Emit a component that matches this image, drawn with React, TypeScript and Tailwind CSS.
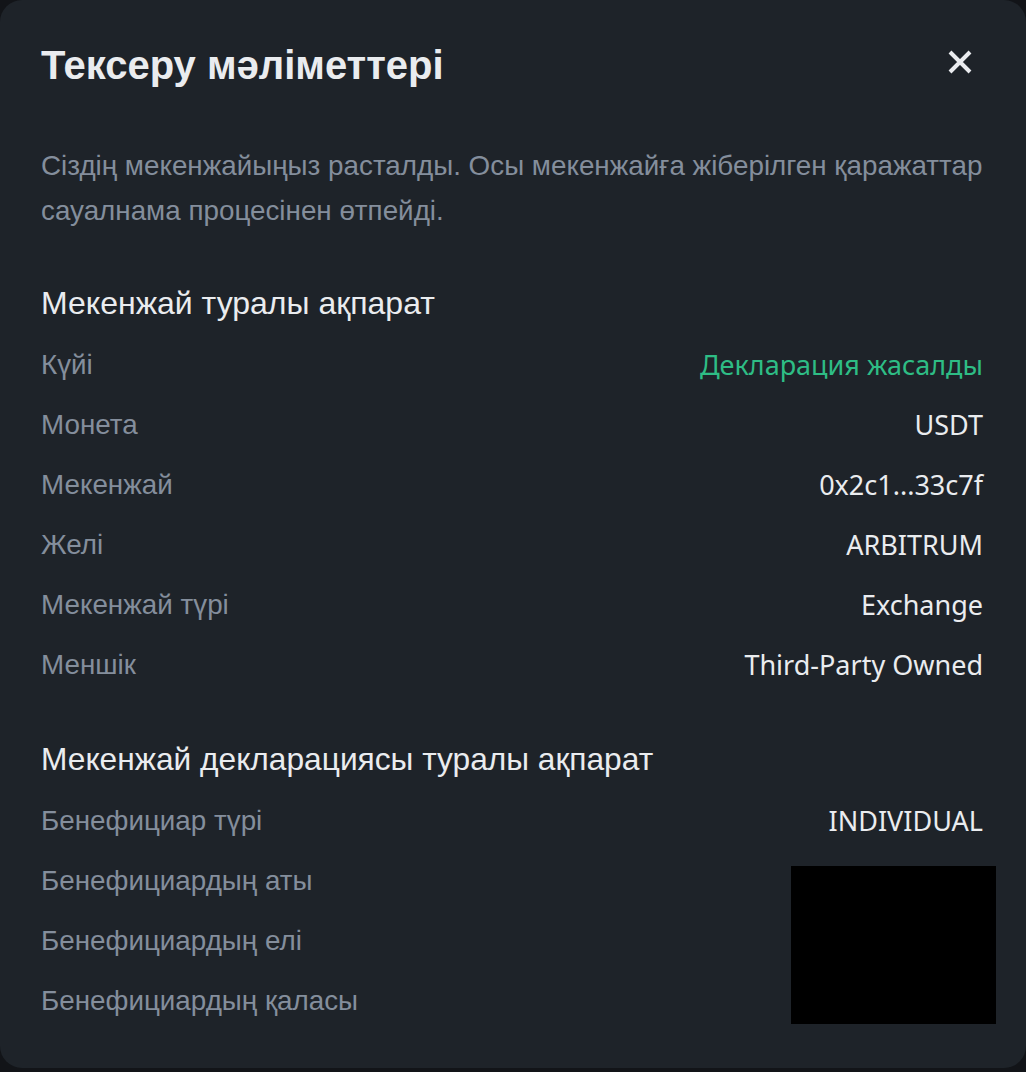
import React from "react";

const rowsA = [
  { label: "Күйі", value: "Декларация жасалды", green: true },
  { label: "Монета", value: "USDT" },
  { label: "Мекенжай", value: "0x2c1...33c7f" },
  { label: "Желі", value: "ARBITRUM" },
  { label: "Мекенжай түрі", value: "Exchange" },
  { label: "Меншік", value: "Third-Party Owned" },
];

const rowsB = ["Бенефициар түрі", "Бенефициардың аты", "Бенефициардың елі", "Бенефициардың қаласы"];

const Row = ({ label, value, green }: { label: string; value?: string; green?: boolean }) => (
  <div className="flex h-[60px] items-center justify-between">
    <span className="text-[27.8px] text-[#848e9c]">{label}</span>
    {value && (
      <span
        className={`text-[27px] font-['Noto_Sans',sans-serif] ${green ? "text-[#2ebd85]" : "text-[#eaecef]"}`}
      >
        {value}
      </span>
    )}
  </div>
);

export default function App() {
  return (
    <div className="h-[1072px] w-[1026px] bg-[#121418] font-['Liberation_Sans',Arial,sans-serif]">
      <div className="h-[1068px] w-full rounded-[22px] bg-[#1e2329] px-[41px] pt-[41px]">
        <div className="flex h-[48px] items-center justify-between">
          <h1 className="text-[40px] font-bold leading-[48px] text-[#eaecef]">Тексеру мәліметтері</h1>
          <svg width="30" height="30" viewBox="0 0 24 24" className="mr-[10px] mt-[-6px]">
            <path d="M4 4L20 20M20 4L4 20" stroke="#eaecef" strokeWidth="3.2" />
          </svg>
        </div>
        <p className="mt-[54px] text-[27.8px] leading-[45px] text-[#848e9c]">
          Сіздің мекенжайыңыз расталды. Осы мекенжайға жіберілген қаражаттар сауалнама процесінен өтпейді.
        </p>
        <h2 className="mt-[50px] text-[32px] leading-[40px] text-[#eaecef]">Мекенжай туралы ақпарат</h2>
        <div className="mt-[12px] pr-[2px]">
          {rowsA.map((r) => (
            <Row key={r.label} {...r} />
          ))}
        </div>
        <h2 className="mt-[44px] text-[31.7px] leading-[40px] text-[#eaecef]">
          Мекенжай декларациясы туралы ақпарат
        </h2>
        <div className="relative mt-[12px] pr-[2px]">
          <Row label={rowsB[0]} value="INDIVIDUAL" />
          {rowsB.slice(1).map((l) => (
            <Row key={l} label={l} />
          ))}
          <div className="absolute right-[-11px] top-[75px] h-[158px] w-[205px] bg-black" />
        </div>
      </div>
    </div>
  );
}
